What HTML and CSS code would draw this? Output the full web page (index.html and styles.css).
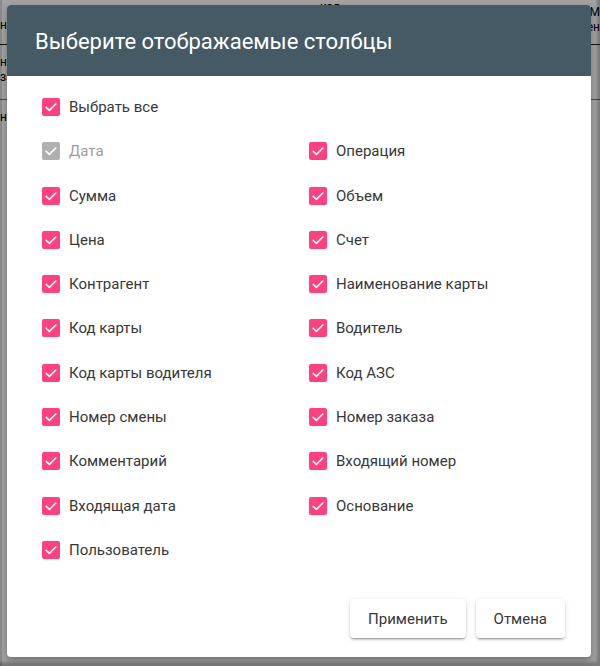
FILE: index.html
```html
<!DOCTYPE html>
<html lang="ru">
<head>
<meta charset="utf-8">
<title>Выберите отображаемые столбцы</title>
<link rel="stylesheet" href="styles.css">
</head>
<body>
<div class="page">
  <div class="grid-row head-row">
    <div class="cell c-left"><span class="t1">нт</span></div>
    <div class="cell c-mid"><span class="top">кол</span></div>
    <div class="cell c-right"><span class="t2">М<br>ен</span></div>
  </div>
  <div class="grid-row body-row">
    <div class="cell c-left"><span class="t3">нс<br>за</span></div>
  </div>
  <div class="grid-row body-row2">
    <div class="cell c-left"><span class="t3">нс</span></div>
  </div>
</div>

<div class="overlay">
  <div class="dialog">
    <div class="dialog-header">
      <h1 class="dialog-title">Выберите отображаемые столбцы</h1>
    </div>
    <div class="dialog-content">
      <div class="all-row">
        <label class="check"><span class="box"><svg viewBox="0 0 18 18"><path d="M4.2 9.4 L7.4 12.4 L13.8 6"/></svg></span><span class="lbl">Выбрать все</span></label>
      </div>
      <div class="columns">
        <label class="check disabled"><span class="box"><svg viewBox="0 0 18 18"><path d="M4.2 9.4 L7.4 12.4 L13.8 6"/></svg></span><span class="lbl">Дата</span></label>
        <label class="check"><span class="box"><svg viewBox="0 0 18 18"><path d="M4.2 9.4 L7.4 12.4 L13.8 6"/></svg></span><span class="lbl">Операция</span></label>
        <label class="check"><span class="box"><svg viewBox="0 0 18 18"><path d="M4.2 9.4 L7.4 12.4 L13.8 6"/></svg></span><span class="lbl">Сумма</span></label>
        <label class="check"><span class="box"><svg viewBox="0 0 18 18"><path d="M4.2 9.4 L7.4 12.4 L13.8 6"/></svg></span><span class="lbl">Объем</span></label>
        <label class="check"><span class="box"><svg viewBox="0 0 18 18"><path d="M4.2 9.4 L7.4 12.4 L13.8 6"/></svg></span><span class="lbl">Цена</span></label>
        <label class="check"><span class="box"><svg viewBox="0 0 18 18"><path d="M4.2 9.4 L7.4 12.4 L13.8 6"/></svg></span><span class="lbl">Счет</span></label>
        <label class="check"><span class="box"><svg viewBox="0 0 18 18"><path d="M4.2 9.4 L7.4 12.4 L13.8 6"/></svg></span><span class="lbl">Контрагент</span></label>
        <label class="check"><span class="box"><svg viewBox="0 0 18 18"><path d="M4.2 9.4 L7.4 12.4 L13.8 6"/></svg></span><span class="lbl">Наименование карты</span></label>
        <label class="check"><span class="box"><svg viewBox="0 0 18 18"><path d="M4.2 9.4 L7.4 12.4 L13.8 6"/></svg></span><span class="lbl">Код карты</span></label>
        <label class="check"><span class="box"><svg viewBox="0 0 18 18"><path d="M4.2 9.4 L7.4 12.4 L13.8 6"/></svg></span><span class="lbl">Водитель</span></label>
        <label class="check"><span class="box"><svg viewBox="0 0 18 18"><path d="M4.2 9.4 L7.4 12.4 L13.8 6"/></svg></span><span class="lbl">Код карты водителя</span></label>
        <label class="check"><span class="box"><svg viewBox="0 0 18 18"><path d="M4.2 9.4 L7.4 12.4 L13.8 6"/></svg></span><span class="lbl">Код АЗС</span></label>
        <label class="check"><span class="box"><svg viewBox="0 0 18 18"><path d="M4.2 9.4 L7.4 12.4 L13.8 6"/></svg></span><span class="lbl">Номер смены</span></label>
        <label class="check"><span class="box"><svg viewBox="0 0 18 18"><path d="M4.2 9.4 L7.4 12.4 L13.8 6"/></svg></span><span class="lbl">Номер заказа</span></label>
        <label class="check"><span class="box"><svg viewBox="0 0 18 18"><path d="M4.2 9.4 L7.4 12.4 L13.8 6"/></svg></span><span class="lbl">Комментарий</span></label>
        <label class="check"><span class="box"><svg viewBox="0 0 18 18"><path d="M4.2 9.4 L7.4 12.4 L13.8 6"/></svg></span><span class="lbl">Входящий номер</span></label>
        <label class="check"><span class="box"><svg viewBox="0 0 18 18"><path d="M4.2 9.4 L7.4 12.4 L13.8 6"/></svg></span><span class="lbl">Входящая дата</span></label>
        <label class="check"><span class="box"><svg viewBox="0 0 18 18"><path d="M4.2 9.4 L7.4 12.4 L13.8 6"/></svg></span><span class="lbl">Основание</span></label>
        <label class="check"><span class="box"><svg viewBox="0 0 18 18"><path d="M4.2 9.4 L7.4 12.4 L13.8 6"/></svg></span><span class="lbl">Пользователь</span></label>
      </div>
    </div>
    <div class="dialog-actions">
      <button class="btn">Применить</button>
      <button class="btn">Отмена</button>
    </div>
  </div>
</div>
</body>
</html>
```

FILE: styles.css
```css
* { box-sizing: border-box; }
html, body { margin: 0; padding: 0; }
body {
  width: 600px;
  height: 666px;
  overflow: hidden;
  background: #fff;
  font-family: Roboto, "Liberation Sans", Arial, sans-serif;
  position: relative;
}

/* underlying table (partly hidden behind the dialog) */
.page { width: 600px; height: 666px; }
.grid-row { display: flex; justify-content: flex-start; }
.head-row { height: 45px; border-bottom: 1px solid #222; }
.body-row { height: 55px; border-bottom: 1px solid #777; }
.body-row2 { height: 40px; }
.cell { white-space: nowrap; font-size: 12px; color: #000; line-height: 15px; }
.c-left { width: 14px; }
.c-left .t1 { display: block; padding-top: 18px; }
.c-left .t3 { display: block; padding-top: 10px; }
.c-mid { width: 30px; margin-left: 306px; }
.c-mid .top { display: block; padding-top: 0; }
.c-right { width: 14px; margin-left: auto; text-align: right; }
.c-right .t2 { display: block; padding-top: 5px; }

/* overlay */
.overlay {
  position: absolute;
  inset: 0;
  background: rgba(0, 0, 0, 0.37);
  padding: 5px 0 0 7px;
  box-shadow: inset -4px -5px 3px -1px rgba(0,0,0,0.25), inset 2px 0 0 rgba(0,0,0,0.15);
}
.dialog {
  width: 584px;
  height: 652px;
  background: #fff;
  border-radius: 4px;
  overflow: hidden;
  display: flex;
  flex-direction: column;
  box-shadow: 0 3px 6px rgba(0,0,0,0.3);
}
.dialog-header {
  height: 71px;
  background: #455a64;
  display: flex;
  align-items: center;
  padding-left: 28px;
  flex: none;
}
.dialog-title {
  margin: 0;
  font-size: 22px;
  font-weight: 400;
  color: #fff;
  padding-top: 2px;
}
.dialog-content {
  padding: 22px 0 0 35px;
}
.all-row { height: 44.3px; }
.columns {
  display: grid;
  grid-template-columns: 267px 1fr;
  grid-auto-rows: 44.3px;
}
.check {
  display: flex;
  align-items: flex-start;
  gap: 9px;
  color: #383838;
  font-size: 15px;
  line-height: 18px;
}
.box {
  width: 18px;
  height: 18px;
  border-radius: 2px;
  background: #ff4081;
  flex: none;
  display: block;
}
.box svg { width: 18px; height: 18px; display: block; }
.box path { fill: none; stroke: #fff; stroke-width: 1.6; stroke-linecap: round; stroke-linejoin: round; }
.lbl { display: block; }
.check.disabled { color: #9e9e9e; }
.check.disabled .box { background: #b0b0b0; }

.dialog-actions {
  margin-top: auto;
  display: flex;
  justify-content: flex-end;
  gap: 10px;
  padding: 0 26px 19px 0;
}
.btn {
  height: 39px;
  border: none;
  background: #fff;
  border-radius: 4px;
  font-family: Roboto, "Liberation Sans", Arial, sans-serif;
  font-size: 15px;
  color: #383838;
  padding: 0 18px;
  box-shadow: 0 3px 1px -2px rgba(0,0,0,0.2), 0 2px 2px 0 rgba(0,0,0,0.14), 0 1px 5px 0 rgba(0,0,0,0.12);
}
```
